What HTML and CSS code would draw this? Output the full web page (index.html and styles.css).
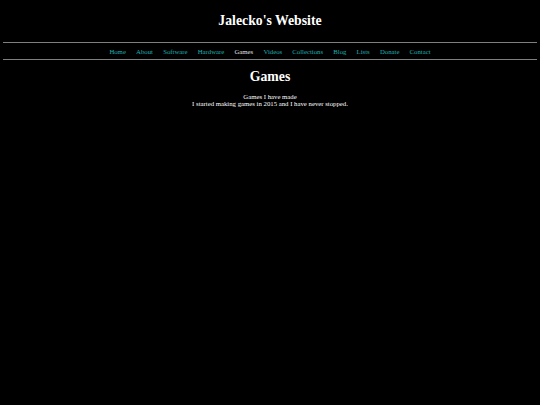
FILE: index.html
```html
<!DOCTYPE html>
<html>
<head>
<meta charset="utf-8">
<title>Jalecko's Website</title>
<link rel="stylesheet" href="styles.css">
</head>
<body>
<header class="site-header">
<h1 class="site-title">Jalecko's Website</h1>
</header>
<hr class="rule">
<nav class="nav">
<a href="#">Home</a>
<a href="#">About</a>
<a href="#">Software</a>
<a href="#">Hardware</a>
<a href="#" class="current">Games</a>
<a href="#">Videos</a>
<a href="#">Collections</a>
<a href="#">Blog</a>
<a href="#">Lists</a>
<a href="#">Donate</a>
<a href="#">Contact</a>
</nav>
<hr class="rule">
<main class="content">
<h2 class="page-title">Games</h2>
<p class="intro">Games I have made<br>I started making games in 2015 and I have never stopped.</p>
</main>
</body>
</html>
```
FILE: styles.css
```css
html, body {
  background: #000;
}
body {
  margin: 0;
  padding: 0 3px;
  color: #fff;
  font-family: "Liberation Serif", "Times New Roman", serif;
  font-size: 6.75px;
}
.site-header {
  padding-top: 13px;
  height: 29px;
  box-sizing: border-box;
}
.site-title {
  margin: 0;
  text-align: center;
  font-size: 13.75px;
  line-height: 16px;
  font-weight: bold;
}
.rule {
  margin: 0;
  border: 0;
  border-top: 1px solid #7f7f7f;
  height: 0;
}
.site-header + .rule {
  margin-top: 13px;
}
.nav {
  display: flex;
  justify-content: center;
  gap: 10.2px;
  height: 16px;
  align-items: center;
}
.nav a {
  color: #1fb0b0;
  text-decoration: none;
  font-size: 6.75px;
}
.nav a.current {
  color: #e0e0e0;
}
.content {
  text-align: center;
}
.page-title {
  margin: 9px 0 0;
  font-size: 13.75px;
  line-height: 16px;
}
.intro {
  margin: 8px 0 0;
  line-height: 7.25px;
  font-size: 6.75px;
}
```
